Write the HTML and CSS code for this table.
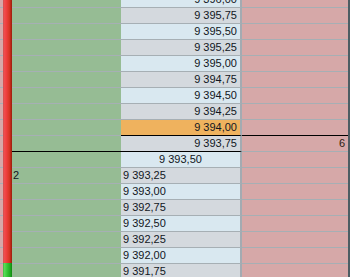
FILE: index.html
```html
<!DOCTYPE html>
<html>
<head>
<meta charset="utf-8">
<link rel="stylesheet" href="styles.css">
</head>
<body>
<div class="dom">
  <div class="strip"></div>
  <div class="bar"><div class="bar-red"></div><div class="bar-green"></div></div>
  <div class="ladder">
    <div class="row first"><div class="g"></div><div class="p b">9 396,00</div><div class="r"></div></div>
    <div class="row"><div class="g"></div><div class="p a">9 395,75</div><div class="r"></div></div>
    <div class="row"><div class="g"></div><div class="p b">9 395,50</div><div class="r"></div></div>
    <div class="row"><div class="g"></div><div class="p a">9 395,25</div><div class="r"></div></div>
    <div class="row"><div class="g"></div><div class="p b">9 395,00</div><div class="r"></div></div>
    <div class="row"><div class="g"></div><div class="p a">9 394,75</div><div class="r"></div></div>
    <div class="row"><div class="g"></div><div class="p b">9 394,50</div><div class="r"></div></div>
    <div class="row"><div class="g"></div><div class="p a">9 394,25</div><div class="r"></div></div>
    <div class="row"><div class="g"></div><div class="p o dark">9 394,00</div><div class="r dark"></div></div>
    <div class="row"><div class="g dark"></div><div class="p a dark">9 393,75</div><div class="r">6</div></div>
    <div class="row"><div class="g"></div><div class="p b center">9 393,50</div><div class="r"></div></div>
    <div class="row"><div class="g">2</div><div class="p a left">9 393,25</div><div class="r"></div></div>
    <div class="row"><div class="g"></div><div class="p b left">9 393,00</div><div class="r"></div></div>
    <div class="row"><div class="g"></div><div class="p a left">9 392,75</div><div class="r"></div></div>
    <div class="row"><div class="g"></div><div class="p b left">9 392,50</div><div class="r"></div></div>
    <div class="row"><div class="g"></div><div class="p a left">9 392,25</div><div class="r"></div></div>
    <div class="row"><div class="g"></div><div class="p b left">9 392,00</div><div class="r"></div></div>
    <div class="row"><div class="g"></div><div class="p a left">9 391,75</div><div class="r"></div></div>
  </div>
  <div class="edge"></div>
</div>
</body>
</html>
```
FILE: styles.css
```css
html, body {
  margin: 0;
  padding: 0;
  background: #96bc94;
}
.dom {
  display: flex;
  width: 350px;
  height: 277px;
  overflow: hidden;
  font-family: "Liberation Sans", Arial, sans-serif;
  font-size: 11px;
  color: #111622;
}
.strip {
  width: 3px;
  flex: none;
  background: repeating-linear-gradient(to bottom, #d6a8a8 0, #d6a8a8 15px, #a6afb4 15px, #a6afb4 16px);
  background-position: 0 -8px;
}
.bar {
  width: 9px;
  flex: none;
  display: flex;
  flex-direction: column;
}
.bar-red {
  flex: 1;
  background: linear-gradient(to right, #c85050 0, #ee5050 12%, #f04040 35%, #d83424 70%, #b02414 90%, #98200e 100%);
}
.bar-green {
  height: 14px;
  flex: none;
  background: linear-gradient(to right, #40b040 0, #58dc58 15%, #38c838 45%, #20a820 80%, #108810 100%);
}
.ladder {
  flex: 1;
  display: flex;
  flex-direction: column;
}
.row {
  display: flex;
  height: 16px;
  flex: none;
}
.row.first {
  margin-top: -8px;
}
.row > div {
  box-sizing: border-box;
  height: 16px;
  line-height: 15px;
  border-bottom: 1px solid #a6afb4;
  white-space: nowrap;
}
.row > div.dark {
  border-bottom-color: #000;
}
.g {
  width: 109px;
  flex: none;
  background: #96bc94;
  padding-left: 1px;
}
.p {
  width: 121px;
  flex: none;
  border-right: 2px solid #a3abb2;
  text-align: right;
  padding-right: 3px;
}
.p.a { background: #d4d9de; }
.p.b { background: #d9e8f0; }
.p.o { background: #efb25e; }
.p.center { text-align: center; padding-right: 0; }
.p.left { text-align: left; padding-left: 2px; padding-right: 0; }
.r {
  flex: 1;
  background: #d6a8a8;
  text-align: right;
  padding-right: 3px;
  color: #2a1a10;
}
.edge {
  width: 2px;
  flex: none;
  background: #4d5d63;
}
```
